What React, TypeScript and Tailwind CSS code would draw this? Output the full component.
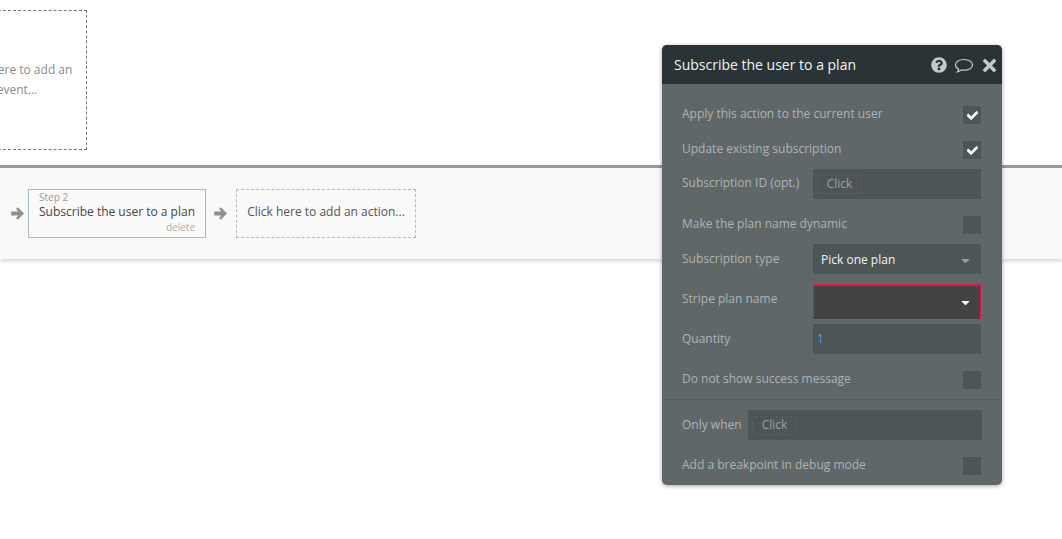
import { FaCaretDown, FaCheck, FaQuestionCircle, FaTimes } from "react-icons/fa";

function Check({ on }: { on?: boolean }) {
  return (
    <div className="flex h-[18px] w-[18px] items-center justify-center bg-[#4d5557]">
      {on && <FaCheck className="text-[11px] text-white" stroke="currentColor" strokeWidth={36} />}
    </div>
  );
}

function CheckRow({ label, on, className }: { label: string; on?: boolean; className?: string }) {
  return (
    <div className={`flex h-[18px] items-center justify-between pl-5 pr-[21px] ${className ?? ""}`}>
      <span className="-mt-0.5 text-[12px] text-[#adb3b4]">{label}</span>
      <Check on={on} />
    </div>
  );
}

function ClickChip() {
  return (
    <span className="flex h-[19px] w-[45px] items-center justify-center rounded-[3px] border border-dashed border-[#596163] text-[12px] text-[#9aa1a2]">
      Click
    </span>
  );
}

function Field({
  label,
  className,
  labelClass,
  children,
}: {
  label: string;
  className?: string;
  labelClass?: string;
  children: React.ReactNode;
}) {
  return (
    <div className={`flex items-center pl-5 pr-[21px] ${className ?? ""}`}>
      <span className={`w-[131px] text-[12px] text-[#adb3b4] ${labelClass ?? ""}`}>{label}</span>
      {children}
    </div>
  );
}

function Arrow() {
  return (
    <svg className="shrink-0" width="13" height="13" viewBox="0 0 13 13" fill="#8f8f8f">
      <path d="M6.8 0.3 13 6.5 6.8 12.7 5 10.9 7.4 8.4H0.2V4.6H7.4L5 2.1z" />
    </svg>
  );
}

export default function App() {
  return (
    <div className="relative h-[539px] w-full overflow-hidden bg-white font-['Open_Sans',sans-serif]">
      {/* Event box */}
      <div className="ml-[-63px] mt-2.5 flex h-[140px] w-[150px] items-center justify-center border border-dashed border-[#777] pl-[14px] pr-1 text-center text-[12px] leading-[20px] text-[#8a8a8a]">
        Click here to add an event...
      </div>

      {/* Workflow band */}
      <div className="mt-[15px] h-[94px] border-t-[3px] border-[#999] bg-[#f9f9f9] pl-[11px] pt-[21px] shadow-[0_2px_4px_rgba(0,0,0,0.18)]">
        <div className="flex items-center">
          <Arrow />
          <div className="ml-1 flex h-[49px] w-[178px] flex-col border border-[#a9bac5] bg-[#fafafa] px-2.5">
            <span className="text-[10px] leading-[14px] text-[#999]">Step 2</span>
            <span className="whitespace-nowrap text-[12px] leading-[16px] text-[#444]">Subscribe the user to a plan</span>
            <span className="text-right text-[10px] leading-[14px] text-[#aaa]">delete</span>
          </div>
          <div className="ml-2">
            <Arrow />
          </div>
          <div className="ml-[9px] flex h-[49px] w-[180px] items-center justify-center border border-dashed border-[#aebbc2] pb-[3px] text-[12px] text-[#555]">
            Click here to add an action...
          </div>
        </div>
      </div>

      {/* Property editor */}
      <div className="absolute left-[662px] top-[45px] w-[340px] rounded-[5px] bg-[#5f6769] shadow-[0_1px_4px_rgba(0,0,0,0.35)]">
        <div className="flex h-[39px] items-center justify-between rounded-t-[5px] bg-[#2a3335] pl-3 pr-[3px]">
          <span className="text-[14px] text-[#f2f3f3]">Subscribe the user to a plan</span>
          <div className="flex items-center text-[#c4c9ca]">
            <FaQuestionCircle className="text-[16px]" />
            <svg className="ml-[7px] mt-0.5" width="20" height="16" viewBox="0 0 19 16" fill="none" stroke="currentColor" strokeWidth="1.2">
              <path d="M9.5 1.5C4.8 1.5 1 3.9 1 6.9c0 1.8 1.2 3.3 3.2 4.2-.2 1.1-.7 2-1.4 2.8 1.6-.3 2.9-1.1 3.9-2 .9.2 1.8.3 2.8.3 4.7 0 8.5-2.4 8.5-5.3S14.2 1.5 9.5 1.5z" />
            </svg>
            <FaTimes className="ml-[6px] mt-0.5 text-[19px]" />
          </div>
        </div>

        <div className="flex flex-col pt-[22px]">
          <CheckRow label="Apply this action to the current user" on />
          <CheckRow label="Update existing subscription" on className="mt-[17px]" />
          <Field label="Subscription ID (opt.)" className="mt-2.5" labelClass="-mt-0.5">
            <div className="flex h-[30px] flex-1 items-center bg-[#4d5557] pl-[4px]">
              <ClickChip />
            </div>
          </Field>
          <CheckRow label="Make the plan name dynamic" className="mt-[17px]" />
          <Field label="Subscription type" className="mt-2.5">
            <div className="flex h-[30px] flex-1 items-center justify-between bg-[#4d5557] pl-2 pr-[9px] pt-0.5 text-[12px] text-[#f2f3f3]">
              Pick one plan
              <FaCaretDown className="text-[13px] text-[#9aa0a1]" />
            </div>
          </Field>
          <Field label="Stripe plan name" className="mt-2.5" labelClass="-mt-[5px]">
            <div className="flex h-[35px] flex-1 items-center justify-end border-x border-t-2 border-[#e8104f] bg-[#434343] pr-2">
              <FaCaretDown className="text-[13px] text-white" />
            </div>
          </Field>
          <Field label="Quantity" className="mt-[5px]">
            <div className="flex h-[30px] flex-1 items-center bg-[#4d5557] pl-1 text-[12px] text-[#4a9fe8]">1</div>
          </Field>
          <CheckRow label="Do not show success message" className="mt-[17px]" />
          <div className="mt-2.5 border-t border-[#555d5f]" />
          <div className="mt-2.5 flex items-center pl-5 pr-5">
            <span className="w-[66px] text-[12px] text-[#adb3b4]">Only when</span>
            <div className="flex h-[30px] flex-1 items-center bg-[#4d5557] pl-[4px]">
              <ClickChip />
            </div>
          </div>
          <CheckRow label="Add a breakpoint in debug mode" className="mb-2.5 mt-[17px]" />
        </div>
      </div>
    </div>
  );
}
